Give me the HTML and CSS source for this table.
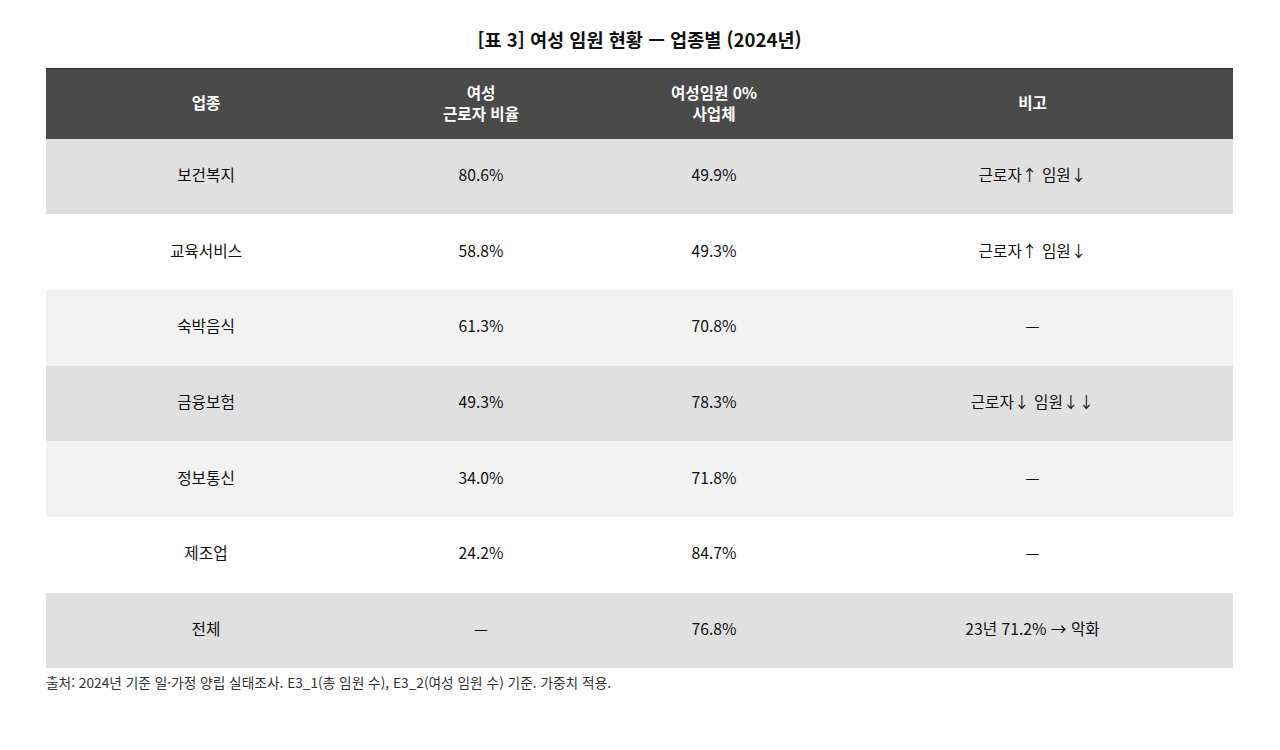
FILE: index.html
```html
<!DOCTYPE html>
<html lang="ko">
<head>
<meta charset="utf-8">
<link rel="stylesheet" href="styles.css">
</head>
<body>
<div class="wrap">
  <h1 class="title">[표 3] 여성 임원 현황 — 업종별 (2024년)</h1>
  <table class="tbl">
    <colgroup>
      <col class="c1"><col class="c2"><col class="c3"><col class="c4">
    </colgroup>
    <thead>
      <tr><th>업종</th><th>여성<br>근로자 비율</th><th>여성임원 0%<br>사업체</th><th>비고</th></tr>
    </thead>
    <tbody>
      <tr class="dark"><td>보건복지</td><td>80.6%</td><td>49.9%</td><td>근로자↑ 임원↓</td></tr>
      <tr class="white"><td>교육서비스</td><td>58.8%</td><td>49.3%</td><td>근로자↑ 임원↓</td></tr>
      <tr class="light"><td>숙박음식</td><td>61.3%</td><td>70.8%</td><td>—</td></tr>
      <tr class="dark"><td>금융보험</td><td>49.3%</td><td>78.3%</td><td>근로자↓ 임원↓↓</td></tr>
      <tr class="light"><td>정보통신</td><td>34.0%</td><td>71.8%</td><td>—</td></tr>
      <tr class="white"><td>제조업</td><td>24.2%</td><td>84.7%</td><td>—</td></tr>
      <tr class="dark"><td>전체</td><td>—</td><td>76.8%</td><td>23년 71.2% → 악화</td></tr>
    </tbody>
  </table>
  <p class="note">출처: 2024년 기준 일·가정 양립 실태조사. E3_1(총 임원 수), E3_2(여성 임원 수) 기준. 가중치 적용.</p>
</div>
</body>
</html>
```

FILE: styles.css
```css
html, body {
  margin: 0;
  padding: 0;
  background: #ffffff;
}
body {
  font-family: "Noto Sans CJK KR", "Noto Sans", sans-serif;
  color: #111111;
}
.wrap {
  padding: 26px 47px 0 46px;
}
.title {
  margin: 0 0 17px 0;
  text-align: center;
  font-size: 18.6px;
  font-weight: 700;
  line-height: 25px;
  color: #111111;
}
.tbl {
  width: 1187px;
  border-collapse: collapse;
  table-layout: fixed;
}
.c1 { width: 320px; }
.c2 { width: 230px; }
.c3 { width: 236px; }
.c4 { width: 401px; }
.tbl th,
.tbl td {
  box-sizing: border-box;
}
.tbl th {
  background: #4a4a4a;
  color: #ffffff;
  font-size: 15.6px;
  font-weight: 700;
  line-height: 21px;
  height: 70px;
  padding: 0 0 2px 0;
  border-top: 1px solid #2e2e2e;
  text-align: center;
  vertical-align: middle;
}
.tbl td {
  height: 75.7px;
  padding: 0 0 3px 0;
  font-size: 15.7px;
  line-height: 20px;
  text-align: center;
  vertical-align: middle;
  color: #111111;
}
.dark td { background: #e0e0e0; }
.light td { background: #f2f2f2; }
.white td { background: #ffffff; }
.note {
  margin: 5px 0 0 0;
  font-size: 13.7px;
  line-height: 18px;
  color: #333333;
}
```
